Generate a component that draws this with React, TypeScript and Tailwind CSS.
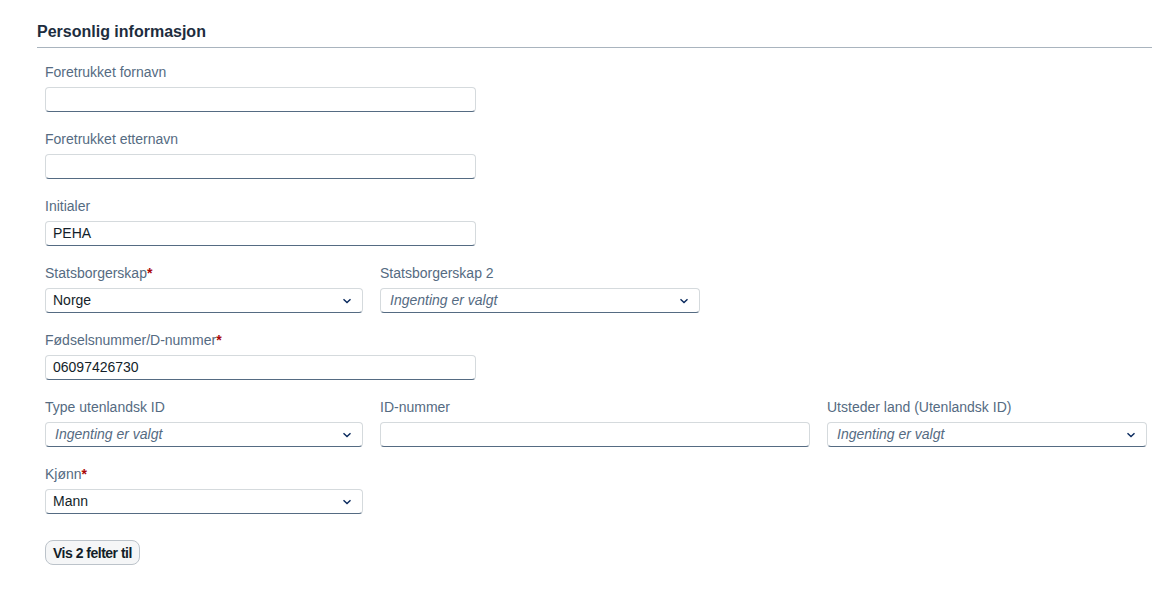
import React from "react";

const font = { fontFamily: '"Liberation Sans", Arial, sans-serif' };

function Chevron() {
  return (
    <svg width="10" height="10" viewBox="0 0 10 10" className="shrink-0">
      <path d="M1.5 3.2 L5 6.6 L8.5 3.2" fill="none" stroke="#0a2a5e" strokeWidth="1.4" />
    </svg>
  );
}

function Label({ text, required }: { text: string; required?: boolean }) {
  return (
    <div className="text-[14px] leading-[18px] text-[#556b82] h-[18px] mb-[6px]">
      {text}
      {required && <span className="text-[#aa0808] font-bold">*</span>}
    </div>
  );
}

function Input({ value, w }: { value?: string; w: string }) {
  return (
    <div
      className={`${w} h-[25px] bg-white border border-[#d5dadd] border-b-[#556b82] rounded-[4px] flex items-center px-[7px] text-[14px] text-[#131e29]`}
    >
      {value}
    </div>
  );
}

function Select({ value, placeholder, w }: { value?: string; placeholder?: string; w: string }) {
  return (
    <div
      className={`${w} h-[25px] bg-white border border-[#d5dadd] border-b-[#556b82] rounded-[4px] flex items-center justify-between pl-[7px] pr-[10px] text-[14px]`}
    >
      {value ? (
        <span className="text-[#131e29]">{value}</span>
      ) : (
        <span className="italic text-[#556b82] pl-[2px]">{placeholder}</span>
      )}
      <Chevron />
    </div>
  );
}

function Field({ label, required, children }: { label: string; required?: boolean; children: React.ReactNode }) {
  return (
    <div className="flex flex-col">
      <Label text={label} required={required} />
      {children}
    </div>
  );
}

export default function App() {
  return (
    <div className="w-[1152px] h-[590px] bg-white overflow-hidden" style={font}>
      <div className="pl-[37px] pt-[22px]">
        <h2 className="text-[16px] leading-[20px] font-bold text-[#1d2d3e] pb-[5px] border-b border-[#a9b4be]">
          Personlig informasjon
        </h2>
        <div className="pl-[8px] pt-[15px] flex flex-col gap-[18px]">
          <Field label="Foretrukket fornavn">
            <Input w="w-[431px]" />
          </Field>
          <Field label="Foretrukket etternavn">
            <Input w="w-[431px]" />
          </Field>
          <Field label="Initialer">
            <Input w="w-[431px]" value="PEHA" />
          </Field>
          <div className="flex gap-[17px]">
            <Field label="Statsborgerskap" required>
              <Select w="w-[318px]" value="Norge" />
            </Field>
            <Field label="Statsborgerskap 2">
              <Select w="w-[320px]" placeholder="Ingenting er valgt" />
            </Field>
          </div>
          <Field label="Fødselsnummer/D-nummer" required>
            <Input w="w-[431px]" value="06097426730" />
          </Field>
          <div className="flex gap-[17px]">
            <Field label="Type utenlandsk ID">
              <Select w="w-[318px]" placeholder="Ingenting er valgt" />
            </Field>
            <Field label="ID-nummer">
              <Input w="w-[430px]" />
            </Field>
            <Field label="Utsteder land (Utenlandsk ID)">
              <Select w="w-[320px]" placeholder="Ingenting er valgt" />
            </Field>
          </div>
          <Field label="Kjønn" required>
            <Select w="w-[318px]" value="Mann" />
          </Field>
          <div className="pt-[8px]">
            <button className="h-[25px] px-[7px] rounded-[8px] border border-[#bcc3ca] bg-[#f5f6f7] text-[14px] tracking-[-0.5px] font-bold text-[#131e29] leading-none">
              Vis 2 felter til
            </button>
          </div>
        </div>
      </div>
    </div>
  );
}
